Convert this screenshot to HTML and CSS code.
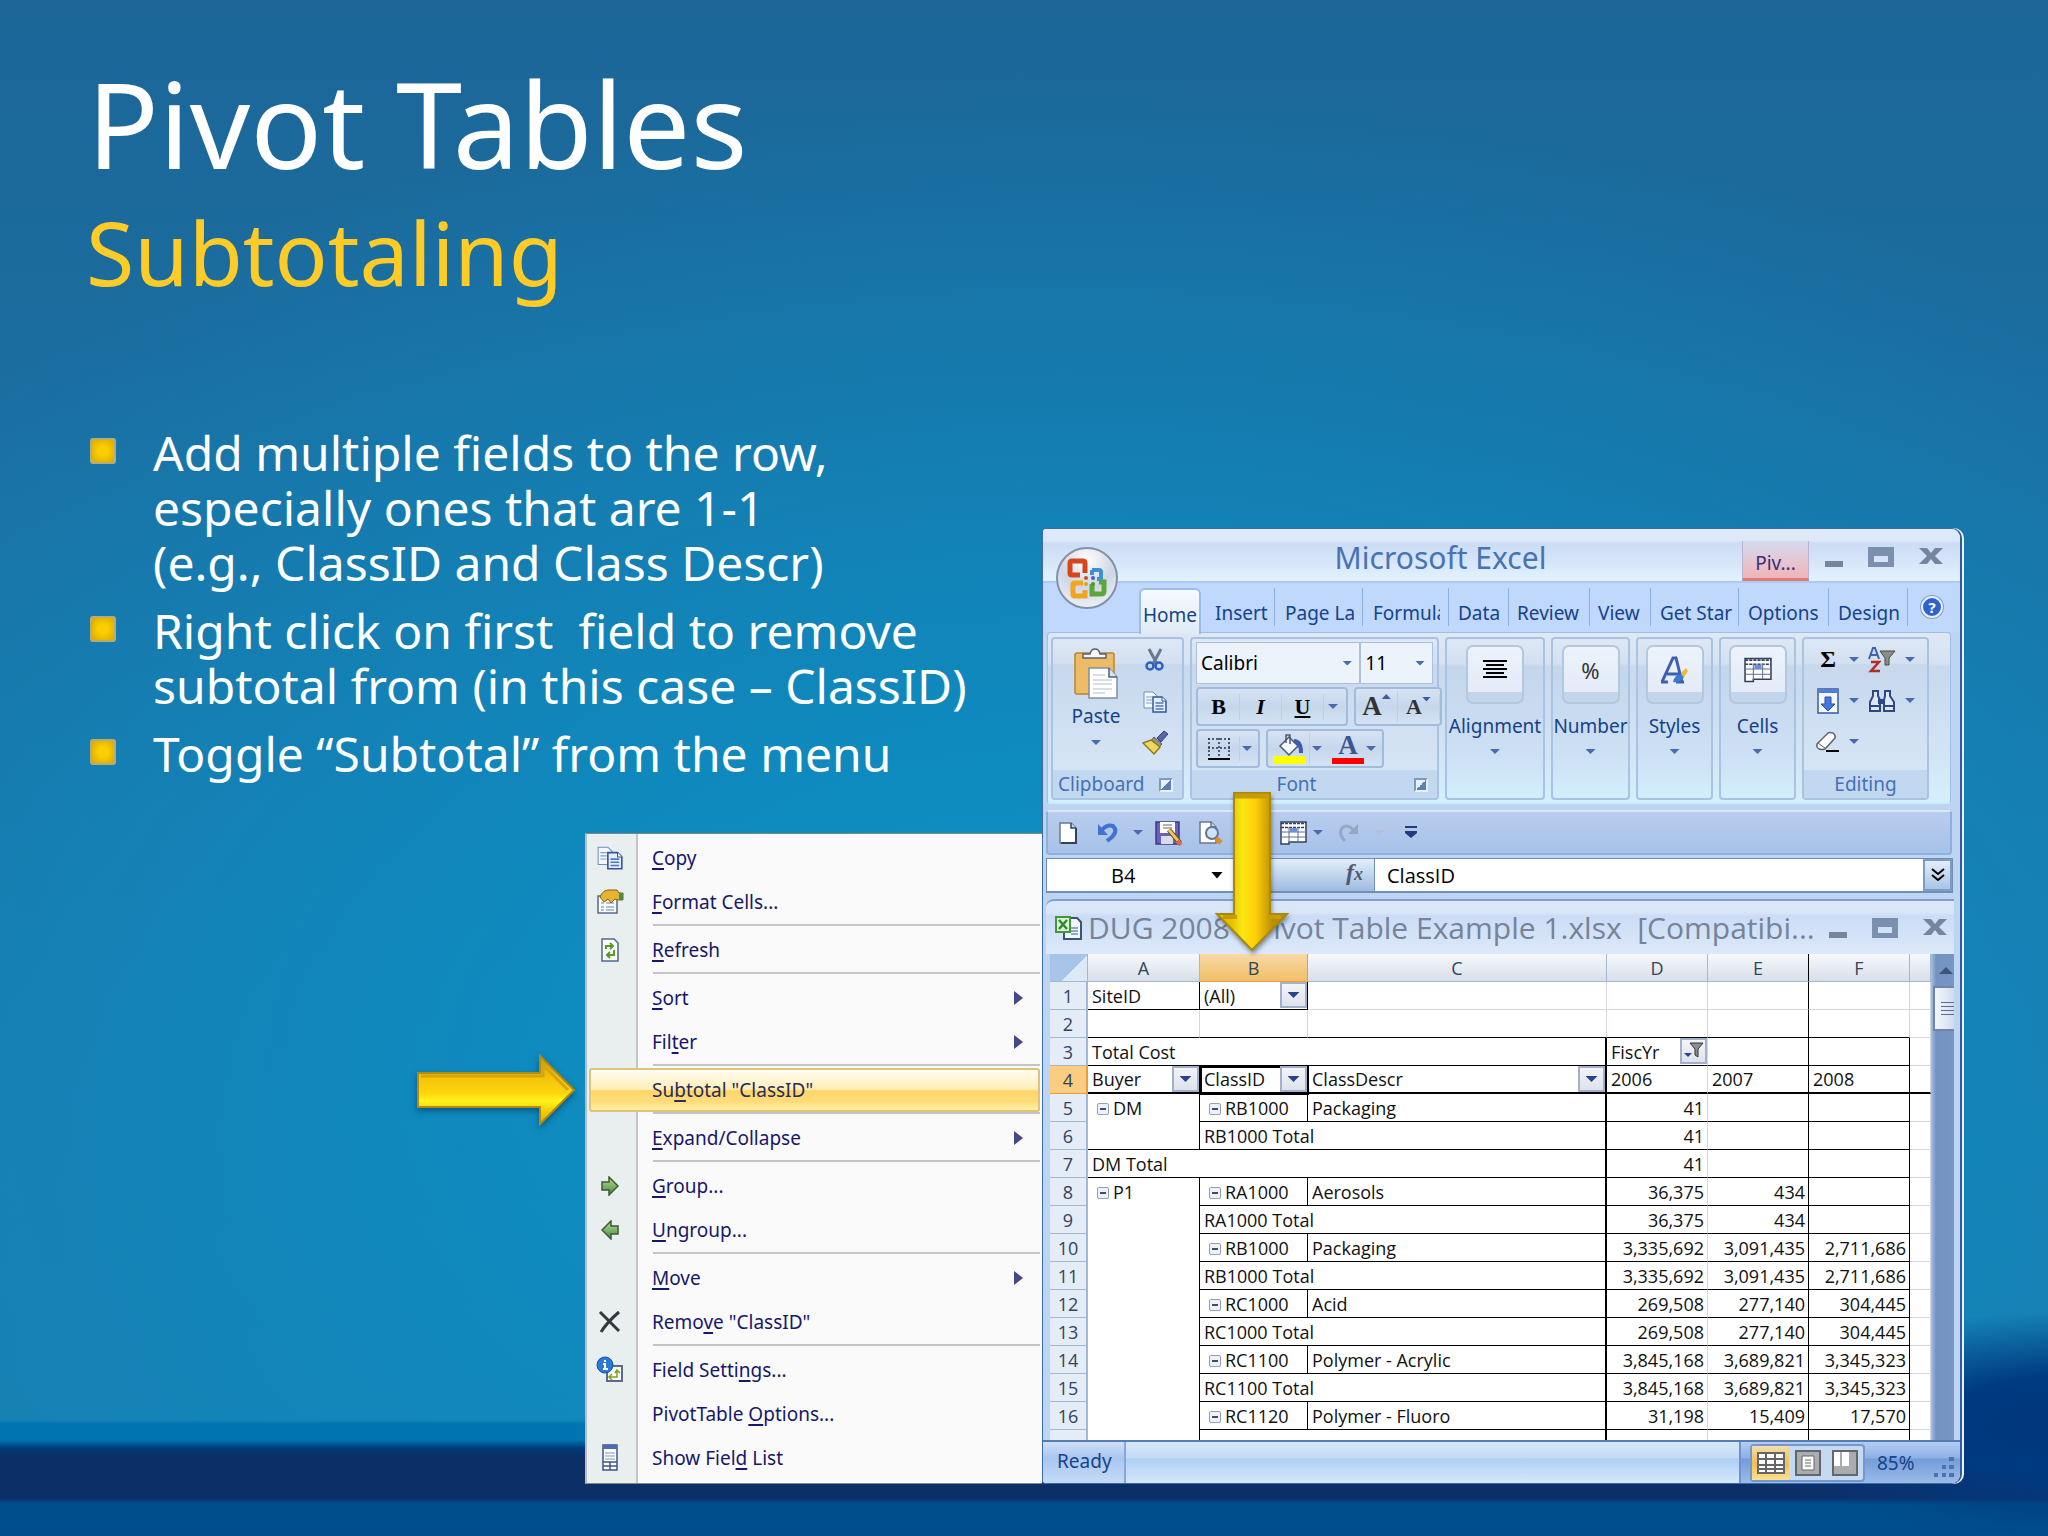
FILE: index.html
```html
<!DOCTYPE html>
<html lang="en">
<head>
    <meta charset="UTF-8">
    <meta name="viewport" content="width=device-width, initial-scale=1.0">
    <title>Pivot Tables - Subtotaling</title>
    <link rel="stylesheet" href="styles.css">
</head>
<body>
    <!-- shared icon shapes -->
    <svg class="defs" aria-hidden="true">
        <defs>
            <linearGradient id="goldH" x1="0" y1="0" x2="0" y2="1">
                <stop offset="0" stop-color="#c99a08"/>
                <stop offset="0.3" stop-color="#f2c10c"/>
                <stop offset="0.55" stop-color="#ffd60c"/>
                <stop offset="0.66" stop-color="#fff51c"/>
                <stop offset="0.8" stop-color="#f0d008"/>
                <stop offset="1" stop-color="#d9b000"/>
            </linearGradient>
            <linearGradient id="goldV" x1="0" y1="0" x2="1" y2="0">
                <stop offset="0.2" stop-color="#e0c000"/>
                <stop offset="0.36" stop-color="#fbe712"/>
                <stop offset="0.55" stop-color="#ffcf08"/>
                <stop offset="0.8" stop-color="#b98d04"/>
            </linearGradient>
            <radialGradient id="orb" cx="0.5" cy="0.2" r="0.9">
                <stop offset="0" stop-color="#ffffff"/>
                <stop offset="0.5" stop-color="#cfd6e4"/>
                <stop offset="1" stop-color="#f4f7fc"/>
            </radialGradient>
            <linearGradient id="green" x1="0" y1="0" x2="0" y2="1">
                <stop offset="0" stop-color="#b5dd98"/>
                <stop offset="1" stop-color="#4c8a3c"/>
            </linearGradient>
        </defs>
        <symbol id="copy" viewBox="0 0 26 24">
            <path d="M2 2h9l4 4v12H2z" fill="#f4f8ff" stroke="#6f8fc4"/>
            <path d="M4 7h6M4 10h6M4 13h6" stroke="#7fa0d8"/>
            <path d="M11 7h9l4 4v11H11z" fill="#e4eefc" stroke="#34559c" stroke-width="1.5"/>
            <path d="M20 7v4h4" fill="#fff" stroke="#34559c"/>
            <path d="M13.500 13h8M13.500 16h8M13.500 19h8" stroke="#4b78cc" stroke-width="1.500"/>
        </symbol>
        <symbol id="grid" viewBox="0 0 27 24">
            <path d="M1 1h25v20H9v2H1z" fill="#fff" stroke="#33415e" stroke-width="1.500"/>
            <path d="M1 2.500h25M1 6.500h25" stroke="#33415e" stroke-width="1.500" stroke-dasharray="3 1"/>
            <path d="M1 11h25M1 16h25M9 6v16M18 6v15" stroke="#5b6f96"/>
            <path d="M10 7h7v4h-7z" fill="#6f8fdc"/>
        </symbol>
    </svg>

    <main class="slide">
        <div class="left">
            <h1>Pivot Tables</h1>
            <h2>Subtotaling</h2>

            <ul class="bullets">
                <li>Add multiple fields to the row,<br>especially ones that are 1-1<br>(e.g., ClassID and Class Descr)</li>
                <li>Right click on first&nbsp; field to remove<br>subtotal from (in this case – ClassID)</li>
                <li>Toggle “Subtotal” from the menu</li>
            </ul>

            <div class="menu-row">
                <svg class="arrow-right" viewBox="0 0 160 76" aria-hidden="true">
                    <path d="M2 20H124V3L158 37L124 71V54H2z" fill="url(#goldH)" stroke="#b48a06" stroke-width="2"/>
                    <path d="M5 23H127V12L152 37" fill="none" stroke="#d8a50a" stroke-width="3"/>
                </svg>

                <nav class="menu">
                    <button class="item"><span class="ico"><svg width="28" height="26"><use href="#copy"/></svg></span><span><u>C</u>opy</span></button>
                    <button class="item"><span class="ico">
                        <svg width="28" height="26" viewBox="0 0 28 26"><path d="M2 7h19v17H2z" fill="#fafcff" stroke="#566a8c" stroke-width="1.500"/><path d="M5 14h3M10 14h8M5 18h3M10 18h8M5 21h3M10 21h8" stroke="#6a83b0"/><path d="M4 8c2-5 5-7 9-7h8l2 3h4v7h-5l-3-1-4 4-3-4-4 3z" fill="#e8b32e" stroke="#7e6318"/><path d="M23 4h4v7h-4z" fill="#4c8a4a"/></svg>
                    </span><span><u>F</u>ormat Cells...</span></button>
                    <hr>
                    <button class="item"><span class="ico">
                        <svg width="20" height="26" viewBox="0 0 20 26"><path d="M2 2h12l4 4v18H2z" fill="#fbfdff" stroke="#4f6a90" stroke-width="1.500"/><path d="M6 12V9h6M10 6l3 3-3 3M14 13v5H8M10 15l-3 3 3 3" fill="none" stroke="#5a9a1c" stroke-width="2"/></svg>
                    </span><span><u>R</u>efresh</span></button>
                    <hr>
                    <button class="item sub"><span class="ico"></span><span><u>S</u>ort</span></button>
                    <button class="item sub"><span class="ico"></span><span>Fil<u>t</u>er</span></button>
                    <hr>
                    <button class="item active"><span class="ico"></span><span>Su<u>b</u>total "ClassID"</span></button>
                    <hr>
                    <button class="item sub"><span class="ico"></span><span><u>E</u>xpand/Collapse</span></button>
                    <hr>
                    <button class="item"><span class="ico">
                        <svg width="18" height="20" viewBox="0 0 18 20"><path d="M1 6h7V1l9 9-9 9v-5H1z" fill="url(#green)" stroke="#3c5a38" stroke-width="1.500"/></svg>
                    </span><span><u>G</u>roup...</span></button>
                    <button class="item"><span class="ico">
                        <svg width="18" height="20" viewBox="0 0 18 20"><path d="M17 6h-7V1l-9 9 9 9v-5h7z" fill="url(#green)" stroke="#3c5a38" stroke-width="1.500"/></svg>
                    </span><span><u>U</u>ngroup...</span></button>
                    <hr>
                    <button class="item sub"><span class="ico"></span><span><u>M</u>ove</span></button>
                    <button class="item"><span class="ico">
                        <svg width="24" height="24" viewBox="0 0 24 24"><path d="M2 2l19 19M21 2C14 8 8 14 3 22" fill="none" stroke="#33383c" stroke-width="3"/></svg>
                    </span><span>Remo<u>v</u>e "ClassID"</span></button>
                    <hr>
                    <button class="item"><span class="ico">
                        <svg width="28" height="28" viewBox="0 0 28 28"><path d="M11 10h15v15H11z" fill="#f6f8fc" stroke="#5a6c90" stroke-width="2"/><path d="M14 21h7v-6M16 18l-3 3 3 3M19 17l2-3 3 3" fill="none" stroke="#86a01c" stroke-width="1.500"/><circle cx="9" cy="9" r="8" fill="#2a78d8" stroke="#1a4fa4"/><path d="M9 4v2M7 8h2v5M7 13h5" stroke="#fff" stroke-width="2" fill="none"/></svg>
                    </span><span>Field Setti<u>n</u>gs...</span></button>
                    <button class="item"><span class="ico"></span><span>PivotTable <u>O</u>ptions...</span></button>
                    <button class="item"><span class="ico">
                        <svg width="16" height="28" viewBox="0 0 16 28"><path d="M1 1h14v25H1z" fill="#fff" stroke="#3f5684" stroke-width="1.500"/><path d="M1 1h14v4H1z" fill="#4a6cb0"/><path d="M3 9h10M3 12h10M3 15h10" stroke="#7d93bd"/><path d="M1 18h14M1 22h14M8 18v8" stroke="#3f5684" stroke-width="1.500"/></svg>
                    </span><span>Show Fiel<u>d</u> List</span></button>
                </nav>
            </div>
        </div>

        <section class="excel">
            <header class="titlebar">
                <div class="app-title">Microsoft Excel</div>
                <div class="context-tab">Piv...</div>
                <div class="win-buttons">
                    <button aria-label="Minimize"><svg width="20" height="24" viewBox="0 0 20 24"><path d="M1 16h18v6H1z" fill="#74859f"/></svg></button>
                    <button aria-label="Maximize"><svg width="26" height="24" viewBox="0 0 26 24"><path d="M0 2h26v20H0zM6 11v6h14v-6z" fill="#7b8fae" fill-rule="evenodd"/></svg></button>
                    <button aria-label="Close"><svg width="26" height="24" viewBox="0 0 26 24"><path d="M1 3h8l4 5 4-5h8l-8 8 8 8h-8l-4-5-4 5H1l8-8z" fill="#74859f"/></svg></button>
                </div>
            </header>
            <button class="office" aria-label="Office Button">
                <svg viewBox="0 0 62 62">
                    <circle cx="31" cy="31" r="30" fill="url(#orb)" stroke="#8391a8" stroke-width="2"/>
                    <g fill="none">
                        <path d="M29 26V16q0-2-2-2H16q-2 0-2 2v10q0 2 2 2h8" stroke="#d8451a" stroke-width="5"/>
                        <path d="M36 23h7q2 0 2 2v7h-4M36 28v-5" stroke="#3c8fd8" stroke-width="4"/>
                        <path d="M27 36h-8q-2 0-2 2v9q0 2 2 2h10v-6" stroke="#f2a51e" stroke-width="5"/>
                        <path d="M36 37v10h9q3 0 3-3v-9h-5" stroke="#5aa83c" stroke-width="5"/>
                    </g>
                    <circle cx="30" cy="31" r="2" fill="#c8501e"/>
                    <circle cx="37" cy="31" r="2" fill="#3468b8"/>
                    <circle cx="30" cy="37" r="2" fill="#e89a1e"/>
                    <circle cx="37" cy="37" r="2" fill="#4a9a34"/>
                </svg>
            </button>

            <div class="tabs">
                <button class="tab home">Home</button>
                <button class="tab t-insert"><span>Insert</span></button>
                <button class="tab t-page"><span>Page Layout</span></button>
                <button class="tab t-formula"><span>Formulas</span></button>
                <button class="tab t-data"><span>Data</span></button>
                <button class="tab t-review"><span>Review</span></button>
                <button class="tab t-view"><span>View</span></button>
                <button class="tab t-start"><span>Get Star</span></button>
                <button class="tab t-options"><span>Options</span></button>
                <button class="tab t-design"><span>Design</span></button>
                <button class="help" aria-label="Help">?</button>
            </div>

            <div class="ribbon">
                <div class="group clipboard">
                    <div class="group-body">
                        <button class="paste">
                            <svg width="46" height="52" viewBox="0 0 46 52"><rect x="2" y="5" width="39" height="41" rx="2" fill="#eebc66" stroke="#b98432" stroke-width="1.500"/><path d="M10 10V6h7q1-5 5-5t5 5h6v4z" fill="#f4f6f8" stroke="#596270" stroke-width="1.500"/><path d="M16 20h20l8 9v21H16z" fill="#fff" stroke="#7f8ea8" stroke-width="1.500"/><path d="M36 20v9h8" fill="#d8e2f0" stroke="#4f5d78" stroke-width="1.500"/><path d="M20 27h12M20 32h19M20 36h19M20 41h19M20 45h12" stroke="#b4bccb"/></svg>
                            Paste
                            <i class="caret"></i>
                        </button>
                        <div class="clip-tools">
                            <button aria-label="Cut"><svg width="20" height="26" viewBox="0 0 20 26"><path d="M4 2l8 15M16 2L8 17" stroke="#68798f" stroke-width="3"/><circle cx="5" cy="19" r="3.500" fill="none" stroke="#2e5fc4" stroke-width="2.500"/><circle cx="14" cy="19" r="3.500" fill="none" stroke="#2e5fc4" stroke-width="2.500"/></svg></button>
                            <button aria-label="Copy"><svg width="26" height="24"><use href="#copy"/></svg></button>
                            <button aria-label="Format Painter"><svg width="26" height="26" viewBox="0 0 26 26"><path d="M22 1l4 3-7 8-4-4z" fill="#5a62b0" stroke="#3c4078"/><path d="M12 7l8 7-3 3-8-6z" fill="#9a9488" stroke="#555"/><path d="M9 10l9 7-6 7L1 13z" fill="#f0d860" stroke="#8f7720" stroke-width="1.500"/></svg></button>
                        </div>
                    </div>
                    <div class="group-name">Clipboard<i class="launcher"></i></div>
                </div>

                <div class="group font">
                    <div class="group-body">
                        <div class="row">
                            <div class="combo"><input type="text" value="Calibri" aria-label="Font name"><i class="caret"></i></div>
                            <div class="combo size"><input type="text" value="11" aria-label="Font size"><i class="caret"></i></div>
                        </div>
                        <div class="row tools">
                            <div class="set wide">
                                <button class="serif"><b>B</b></button>
                                <button class="serif"><b><em>I</em></b></button>
                                <button class="serif"><b><u>U</u></b></button>
                                <i class="caret"></i>
                            </div>
                            <div class="set grow">
                                <button class="serif big">A<i class="tri up"></i></button>
                                <button class="serif">A<i class="tri"></i></button>
                            </div>
                        </div>
                        <div class="row tools">
                            <div class="set">
                                <button aria-label="Borders"><svg width="24" height="24" viewBox="0 0 24 24"><path d="M2 1v19M12 1v19M22 1v19M1 2h22M1 11h22" stroke="#2a3350" stroke-width="1.500" stroke-dasharray="2 2"/><path d="M1 22h22" stroke="#000" stroke-width="2"/></svg></button>
                                <i class="caret"></i>
                            </div>
                            <div class="set">
                                <button aria-label="Fill Color"><svg width="34" height="32" viewBox="0 0 34 32"><path d="M8 13l9-9 9 9-9 9z" fill="#f4f7fb" stroke="#4c5a74" stroke-width="1.500"/><path d="M14 10V2h4v9" fill="none" stroke="#4c5a74" stroke-width="1.500"/><path d="M22 8q7 0 7 12" fill="none" stroke="#3c5cb0" stroke-width="4"/><path d="M1 23h32v8H1z" fill="#ffff00"/></svg></button>
                                <i class="caret"></i>
                                <button class="serif fontcolor">A</button>
                                <i class="caret"></i>
                            </div>
                        </div>
                    </div>
                    <div class="group-name">Font<i class="launcher"></i></div>
                </div>

                <button class="group small alignment">
                    <span class="tile"><svg width="24" height="20" viewBox="0 0 24 20"><path d="M0 1h24M3 5h18M0 9h24M3 13h18M0 17h24" stroke="#000" stroke-width="2"/></svg></span>
                    Alignment<i class="caret"></i>
                </button>
                <button class="group small number">
                    <span class="tile">%</span>
                    Number<i class="caret"></i>
                </button>
                <button class="group small styles">
                    <span class="tile"><svg width="28" height="28" viewBox="0 0 28 28"><path d="M1 26L12 2h3l6 24M6 18h12M0 26h7M15 26h8" fill="none" stroke="#3f5fae" stroke-width="3"/><path d="M12 26q2-8 8-8l3 3q-3 6-11 5z" fill="#3a7ad0"/><path d="M20 17l5-5 2 3-4 6z" fill="#f0b92c"/></svg></span>
                    Styles<i class="caret"></i>
                </button>
                <button class="group small cells">
                    <span class="tile"><svg width="28" height="28"><use href="#grid"/></svg></span>
                    Cells<i class="caret"></i>
                </button>

                <div class="group editing">
                    <div class="group-body edit-grid">
                        <button class="serif sigma"><b>Σ</b></button><i class="caret"></i>
                        <button aria-label="Sort and Filter"><svg width="28" height="26" viewBox="0 0 28 26"><path d="M1 12L5 1h2l4 11M3 8h6" fill="none" stroke="#3c62b4" stroke-width="2"/><path d="M3 15h8L3 24h9" fill="none" stroke="#b42c28" stroke-width="2.500"/><path d="M12 4h15l-6 7v7h-4v-7z" fill="#8a8e86" stroke="#44483e"/></svg></button><i class="caret"></i>
                        <button aria-label="Fill"><svg width="22" height="26" viewBox="0 0 22 26"><path d="M1 1h20v24H1z" fill="#f2f6fd" stroke="#3c5a9c" stroke-width="1.500"/><path d="M1 1h20v4H1z" fill="#4f80d8"/><path d="M8 9h6v7h4l-7 7-7-7h4z" fill="#3f78e0" stroke="#2a50a0"/></svg></button><i class="caret"></i>
                        <button aria-label="Find"><svg width="28" height="24" viewBox="0 0 28 24"><path d="M5 2h5v5l2 4v11H2V13l3-6zM17 2h5v5l4 6v9H16V11l1-4z" fill="#dfe8f8" stroke="#2f4784" stroke-width="2"/><path d="M10 10h6v5h-6z" fill="#2f4784"/><path d="M2 17h10M16 17h10" stroke="#2f4784" stroke-width="2"/></svg></button><i class="caret"></i>
                        <button aria-label="Clear"><svg width="26" height="22" viewBox="0 0 26 22"><path d="M2 13L13 2q2-1 5 0 3 2 2 5L10 18q-3 1-6 0-3-2-2-5z" fill="#fff" stroke="#5d6675" stroke-width="1.500"/><path d="M3 12l7 5" stroke="#5d6675"/><path d="M11 20h13" stroke="#000" stroke-width="2"/></svg></button><i class="caret"></i>
                    </div>
                    <div class="group-name">Editing</div>
                </div>
            </div>

            <div class="qat">
                <button aria-label="New"><svg width="20" height="24" viewBox="0 0 20 24"><path d="M2 2h11l5 5v15H2z" fill="#fff" stroke="#6a7890" stroke-width="1.500"/><path d="M13 2v5h5" fill="#c8d4e8" stroke="#33415e" stroke-width="1.500"/><path d="M18 7v15H3" fill="none" stroke="#33415e" stroke-width="2"/></svg></button>
                <button class="undo" aria-label="Undo"><svg width="22" height="22" viewBox="0 0 22 22"><path d="M5 8q5-6 11-4 5 5-1 11l-5 4" fill="none" stroke="#4272d0" stroke-width="4"/><path d="M1 2v11h10z" fill="#4272d0"/></svg></button>
                <i class="caret"></i>
                <button class="save" aria-label="Save As"><svg width="28" height="26" viewBox="0 0 28 26"><path d="M1 2h23v22H1z" fill="#6a5fc0" stroke="#3d3a80" stroke-width="1.500"/><path d="M5 2h15v11H5z" fill="#fff"/><path d="M8 5h9M8 8h9" stroke="#667"/><path d="M6 16h12v8H6z" fill="#d6dcec"/><path d="M14 10l11 13" stroke="#5b4a1c" stroke-width="5"/><path d="M14 10l11 13" stroke="#f0c84c" stroke-width="3"/><path d="M22 21l4 4" stroke="#d86848" stroke-width="4"/></svg></button>
                <button class="preview" aria-label="Print Preview"><svg width="26" height="26" viewBox="0 0 26 26"><path d="M2 2h11l5 5v16H2z" fill="#fff" stroke="#6a7890" stroke-width="1.500"/><path d="M13 2v5h5" fill="#c8d4e8" stroke="#33415e"/><circle cx="14" cy="13" r="6" fill="#cfe2fa" stroke="#66758f" stroke-width="2"/><path d="M18 18l5 5" stroke="#d8902c" stroke-width="5"/></svg></button>
                <button class="table" aria-label="Pivot Table"><svg width="27" height="24"><use href="#grid"/></svg></button>
                <i class="caret"></i>
                <button class="redo" aria-label="Redo"><svg width="22" height="22" viewBox="0 0 22 22"><path d="M7 19q-7-7-3-13 6-5 12 3" fill="none" stroke="#96a7c4" stroke-width="3"/><path d="M20 2v10H10z" fill="#96a7c4"/></svg></button>
                <i class="caret dim"></i>
                <button class="more" aria-label="Customize"><svg width="12" height="14" viewBox="0 0 12 14"><path d="M0 1h12" stroke="#1f3c7c" stroke-width="2"/><path d="M0 5h12v2l-6 5-6-5z" fill="#1f3c7c"/></svg></button>
            </div>

            <div class="formula">
                <input class="name-box" type="text" value="B4" aria-label="Name box">
                <i class="caret black"></i>
                <span class="fx">f<small>x</small></span>
                <input class="formula-box" type="text" value="ClassID" aria-label="Formula">
                <button class="expand" aria-label="Expand formula bar"><svg width="14" height="14" viewBox="0 0 14 14"><path d="M1 1l6 5 6-5M1 7l6 5 6-5" fill="none" stroke="#000" stroke-width="2"/></svg></button>
            </div>

            <div class="book-title">
                <svg width="28" height="26" viewBox="0 0 28 26"><path d="M9 3h13l4 4v17H9z" fill="#f4f8fd" stroke="#3a5578" stroke-width="2"/><path d="M16 13h7M16 16h7M16 19h7" stroke="#6f8fb4" stroke-width="1.500"/><path d="M1 2h14v15H1z" fill="#dff2d8" stroke="#3f9a3c" stroke-width="2"/><path d="M4 5l8 9M12 5l-8 9" stroke="#2c8a30" stroke-width="2.500"/></svg>
                <div class="book-name">DUG 2008 - Pivot Table Example 1.xlsx&nbsp; [Compatibi...</div>
                <div class="win-buttons">
                    <button aria-label="Minimize"><svg width="20" height="24" viewBox="0 0 20 24"><path d="M1 16h18v6H1z" fill="#74859f"/></svg></button>
                    <button aria-label="Maximize"><svg width="26" height="24" viewBox="0 0 26 24"><path d="M0 2h26v20H0zM6 11v6h14v-6z" fill="#7b8fae" fill-rule="evenodd"/></svg></button>
                    <button aria-label="Close"><svg width="26" height="24" viewBox="0 0 26 24"><path d="M1 3h8l4 5 4-5h8l-8 8 8 8h-8l-4-5-4 5H1l8-8z" fill="#74859f"/></svg></button>
                </div>
            </div>

            <div class="sheet">
                <table>
                    <colgroup>
                        <col class="c-head"><col class="c-a"><col class="c-b"><col>
                        <col class="c-num"><col class="c-num"><col class="c-num"><col class="c-rest">
                    </colgroup>
                    <thead>
                        <tr><th class="corner"></th><th>A</th><th class="sel">B</th><th>C</th><th>D</th><th class="kr">E</th><th>F</th><th></th></tr>
                    </thead>
                    <tbody>
                        <tr><th>1</th><td class="kr kb">SiteID</td><td class="kr kb">(All)<button class="dd" aria-label="Filter"></button></td><td></td><td></td><td class="kr"></td><td></td><td></td></tr>
                        <tr><th>2</th><td class="kb"></td><td class="kb"></td><td class="kb"></td><td class="kb"></td><td class="kr kb"></td><td class="kb"></td><td></td></tr>
                        <tr><th>3</th><td class="hr kb" colspan="3">Total Cost</td><td class="kb">FiscYr<button class="dd filter" aria-label="Filter"><svg width="20" height="18" viewBox="0 0 20 18"><path d="M6 1h13l-5 6v8l-3-2V7z" fill="#8a8e96" stroke="#333"/><path d="M0 11h8l-4 4z" fill="#2c418c"/></svg></button></td><td class="kr kb"></td><td class="kr kb"></td><td></td></tr>
                        <tr class="heavy"><th class="sel">4</th><td>Buyer<button class="dd" aria-label="Filter"></button></td><td class="kr cursor">ClassID<button class="dd" aria-label="Filter"></button></td><td class="hr">ClassDescr<button class="dd" aria-label="Filter"></button></td><td>2006</td><td class="kr">2007</td><td class="kr">2008</td><td></td></tr>
                        <tr class="n"><th>5</th><td class="kr nb in"><i class="minus"></i>DM</td><td class="kr kb in"><i class="minus"></i>RB1000</td><td class="hr kb">Packaging</td><td class="kb">41</td><td class="kr kb"></td><td class="kr kb"></td><td></td></tr>
                        <tr class="n"><th>6</th><td class="kr kb"></td><td class="hr kb" colspan="2">RB1000 Total</td><td class="kb">41</td><td class="kr kb"></td><td class="kr kb"></td><td></td></tr>
                        <tr class="n"><th>7</th><td class="hr kb" colspan="3">DM Total</td><td class="kb">41</td><td class="kr kb"></td><td class="kr kb"></td><td></td></tr>
                        <tr class="n"><th>8</th><td class="kr nb in"><i class="minus"></i>P1</td><td class="kr kb in"><i class="minus"></i>RA1000</td><td class="hr kb">Aerosols</td><td class="kb">36,375</td><td class="kr kb">434</td><td class="kr kb"></td><td></td></tr>
                        <tr class="n"><th>9</th><td class="kr nb"></td><td class="hr kb" colspan="2">RA1000 Total</td><td class="kb">36,375</td><td class="kr kb">434</td><td class="kr kb"></td><td></td></tr>
                        <tr class="n"><th>10</th><td class="kr nb"></td><td class="kr kb in"><i class="minus"></i>RB1000</td><td class="hr kb">Packaging</td><td class="kb">3,335,692</td><td class="kr kb">3,091,435</td><td class="kr kb">2,711,686</td><td></td></tr>
                        <tr class="n"><th>11</th><td class="kr nb"></td><td class="hr kb" colspan="2">RB1000 Total</td><td class="kb">3,335,692</td><td class="kr kb">3,091,435</td><td class="kr kb">2,711,686</td><td></td></tr>
                        <tr class="n"><th>12</th><td class="kr nb"></td><td class="kr kb in"><i class="minus"></i>RC1000</td><td class="hr kb">Acid</td><td class="kb">269,508</td><td class="kr kb">277,140</td><td class="kr kb">304,445</td><td></td></tr>
                        <tr class="n"><th>13</th><td class="kr nb"></td><td class="hr kb" colspan="2">RC1000 Total</td><td class="kb">269,508</td><td class="kr kb">277,140</td><td class="kr kb">304,445</td><td></td></tr>
                        <tr class="n"><th>14</th><td class="kr nb"></td><td class="kr kb in"><i class="minus"></i>RC1100</td><td class="hr kb">Polymer - Acrylic</td><td class="kb">3,845,168</td><td class="kr kb">3,689,821</td><td class="kr kb">3,345,323</td><td></td></tr>
                        <tr class="n"><th>15</th><td class="kr nb"></td><td class="hr kb" colspan="2">RC1100 Total</td><td class="kb">3,845,168</td><td class="kr kb">3,689,821</td><td class="kr kb">3,345,323</td><td></td></tr>
                        <tr class="n"><th>16</th><td class="kr nb"></td><td class="kr kb in"><i class="minus"></i>RC1120</td><td class="hr kb">Polymer - Fluoro</td><td class="kb">31,198</td><td class="kr kb">15,409</td><td class="kr kb">17,570</td><td></td></tr>
                        <tr class="cut"><th></th><td class="kr nb"></td><td class="hr nb" colspan="2"></td><td class="nb"></td><td class="kr nb"></td><td class="kr nb"></td><td class="nb"></td></tr>
                    </tbody>
                </table>
                <div class="scroll">
                    <i class="scroll-up"></i>
                    <i class="thumb"></i>
                </div>
            </div>

            <footer class="status">
                <div class="ready">Ready</div>
                <div class="status-right">
                    <div class="views">
                        <button class="on" aria-label="Normal"><svg width="28" height="24" viewBox="0 0 28 24"><path d="M1 2h26v20H1z" fill="#fff" stroke="#666" stroke-width="2"/><path d="M1 8h26M1 14h26M1 18h26M9 2v20M18 2v20" stroke="#666" stroke-width="2"/></svg></button>
                        <button aria-label="Page Layout"><svg width="26" height="26" viewBox="0 0 26 26"><path d="M1 1h24v24H1z" fill="#a9acb0" stroke="#666" stroke-width="2"/><path d="M7 6h12v14H7z" fill="#fff" stroke="#666"/><path d="M10 10h6M10 13h6M10 16h6" stroke="#666"/></svg></button>
                        <button aria-label="Page Break Preview"><svg width="26" height="26" viewBox="0 0 26 26"><path d="M1 1h24v24H1z" fill="#a9acb0" stroke="#666" stroke-width="2"/><path d="M2 2h6v14H2zM10 2h7v14h-7z" fill="#fff"/></svg></button>
                    </div>
                    <span>85%</span>
                    <svg class="grip" width="22" height="22" viewBox="0 0 22 22"><path d="M16 1h5v4h-5zM9 9h4v4H9zM16 9h5v4h-5zM1 17h4v4H1zM9 17h4v4H9zM16 17h5v4h-5z" fill="#4f72a8"/></svg>
                </div>
            </footer>

            <svg class="arrow-down" viewBox="0 0 74 162" aria-hidden="true">
                <path d="M19 1H55V122H72L37 158L2 122H19z" fill="url(#goldV)" stroke="#a88a08" stroke-width="2"/>
                <path d="M20 4H54" stroke="#c79c06" stroke-width="5"/>
                <path d="M8 125H22M52 125H66" stroke="#c79c06" stroke-width="4"/>
            </svg>
        </section>
    </main>
</body>
</html>
```
FILE: styles.css
```css
*,
*::before,
*::after {
    margin: 0;
    padding: 0;
    box-sizing: border-box;
}

body {
    font-family: 'Noto Sans', 'Open Sans', sans-serif;
    font-size: 19px;
    color: white;
}

button {
    font: inherit;
    color: inherit;
    background: none;
    border: none;
}

input {
    font: inherit;
    color: black;
    border: none;
    background: none;
    min-width: 0;
}

svg {
    display: block;
    flex-shrink: 0;
}

.defs {
    position: absolute;
    width: 0;
    height: 0;
}

.slide {
    min-height: 100vh;
    display: grid;
    grid-template-columns: minmax(0, 1042fr) minmax(0, 920fr);
    padding: 50px 86px 52px 0;
    background:
        radial-gradient(ellipse 400px 115px at 103% 1425px, #00347a 0%, #003a80 45%, rgba(0, 70, 140, 0) 100%),
        linear-gradient(to top, #004c8c 0, #00508c 32px, #0d2f68 38px, #0d2f68 80px, #003c78 88px, #0074b2 96px, #0074b0 112px, rgba(0, 116, 176, 0) 116px),
        radial-gradient(ellipse 75% 65% at 52% 70%, #0894c8 0%, rgba(12, 143, 196, 0.7) 45%, rgba(24, 120, 172, 0) 100%),
        linear-gradient(to bottom, #1c6698 0%, #1b73a6 45%, #1b7cae 100%);
}

/* ---------- left side ---------- */

.left {
    display: flex;
    flex-direction: column;
}

h1 {
    font-size: 119px;
    line-height: 146px;
    font-weight: normal;
    padding-left: 87px;
}

h2 {
    font-size: 88px;
    line-height: 112px;
    font-weight: normal;
    color: #ffcb27;
    padding-left: 86px;
}

.bullets {
    list-style: none;
    margin-top: 117px;
    padding-left: 90px;
    font-size: 48px;
    line-height: 55px;
    white-space: nowrap;
}

.bullets li {
    display: flex;
    margin-bottom: 13px;
}

.bullets li::before {
    content: '';
    flex-shrink: 0;
    width: 26px;
    height: 26px;
    margin: 13px 37px 0 0;
    background: radial-gradient(#fbce00 30%, #d9a800 100%);
    border: 2px solid #b4ab7c;
    border-radius: 3px;
}

.menu-row {
    display: flex;
    justify-content: flex-end;
    align-items: flex-start;
    margin-top: auto;
}

.arrow-right {
    width: 160px;
    height: 76px;
    margin: 220px 9px 0 0;
    filter: drop-shadow(0 3px 3px rgba(0, 40, 80, 0.5));
}

.menu {
    width: 457px;
    height: 651px;
    padding: 2px;
    border: 1px solid #868686;
    border-left: 2px solid #b8bcc4;
    border-right: none;
    background: linear-gradient(to right, #e9eeee 49px, #c5c5c5 49px, #c5c5c5 51px, #fafafa 51px);
    color: #17176b;
}

.menu hr {
    height: 4px;
    border: none;
    border-top: 2px solid #c5c5c5;
    margin-left: 64px;
}

.item {
    display: flex;
    align-items: center;
    width: 100%;
    height: 44px;
    text-align: left;
    white-space: nowrap;
}

.item u {
    text-underline-offset: 3px;
    text-decoration-thickness: 2px;
}

.ico {
    width: 63px;
    padding-right: 21px;
    display: flex;
    justify-content: center;
}

.sub::after {
    content: '';
    margin-left: auto;
    margin-right: 17px;
    border: 7px solid transparent;
    border-left: 9px solid #434a86;
    border-right: none;
}

.active {
    border: 2px solid #ddc47c;
    border-radius: 3px;
    background: linear-gradient(to bottom, #fffdf0 0%, #ffeeb8 48%, #ffd767 52%, #ffdc7c 80%, #fff0a8 100%);
    color: #2a2a5c;
}

.active .ico {
    width: 61px;
}

/* ---------- excel window ---------- */

.excel {
    position: relative;
    align-self: end;
    border: 1px solid #3b6aa8;
    border-right: 2px solid #33599a;
    border-radius: 4px 10px 10px 4px;
    background: #bdd4f3;
    color: #15428b;
    box-shadow: 2px 0 0 #e8f2fb;
    overflow: hidden;
    min-width: 900px;
}

.titlebar {
    display: flex;
    height: 54px;
    padding-left: 96px;
    border-bottom: 2px solid #a9cdf2;
    background: linear-gradient(to bottom, #dfebfa 0, #dce8f8 12px, #cbdcf4 14px, #d5e4f8 30px, #e2f3ff 100%);
}

.app-title {
    flex: 1;
    text-align: center;
    font-size: 30px;
    line-height: 58px;
    color: #4673b4;
}

.context-tab {
    width: 67px;
    margin-top: 12px;
    text-align: center;
    line-height: 44px;
    color: #3b2f7c;
    border: 1px solid #b9b4cf;
    border-top: none;
    border-bottom: 3px solid #e0787c;
    background: linear-gradient(to bottom, #d4dcf0, #e6c4cf 60%, #f0b4b6);
}

.win-buttons {
    display: flex;
    gap: 24px;
    align-items: center;
    padding: 4px 16px 0 15px;
}

.office {
    position: absolute;
    left: 13px;
    top: 18px;
    width: 62px;
    height: 62px;
    z-index: 2;
}

.tabs {
    display: flex;
    height: 49px;
    padding: 5px 0 0 96px;
    background: #bfd8fb;
}

.tab {
    height: 38px;
    line-height: 50px;
    padding-left: 8px;
    text-align: left;
    border-right: 1px solid #8fb0dc;
    white-space: nowrap;
}

.tab span {
    display: block;
    height: 38px;
    line-height: 50px;
}

.home {
    width: 62px;
    height: 46px;
    padding: 0;
    margin-right: 6px;
    text-align: center;
    border: 2px solid #9cbce8;
    border-bottom: none;
    border-radius: 6px 6px 0 0;
    background: linear-gradient(to bottom, #f6faff, #e0eaf6);
}

.t-insert { width: 68px; }
.t-page { width: 88px; padding-left: 10px; }
.t-formula { width: 86px; padding-left: 10px; }
.t-data { width: 60px; padding-left: 9px; }
.t-review { width: 81px; }
.t-view { width: 61px; }
.t-start { width: 88px; padding-left: 9px; }
.t-options { width: 90px; padding-left: 9px; }
.t-design { width: 79px; padding-left: 9px; }

/* labels that run out of room are clipped before the divider */
.t-page span,
.t-formula span {
    overflow: hidden;
    height: 41px;
    margin-right: 8px;
}

.help {
    width: 22px;
    height: 22px;
    margin: 8px 0 0 13px;
    border: 2px solid #e8f1fd;
    border-radius: 50%;
    background: #2f62d0;
    box-shadow: 0 0 0 1px #7a9bd4;
    color: white;
    font-weight: bold;
    font-size: 15px;
    line-height: 18px;
}

.ribbon {
    display: flex;
    gap: 6px;
    height: 172px;
    margin: 0 9px 0 4px;
    padding: 4px 3px 2px;
    border: 1px solid #9ebfe4;
    border-bottom: 2px solid #c4f0fb;
    border-radius: 4px;
    background: linear-gradient(to bottom, #dfe8f4 0, #d6e3f3 30px, #c8d9ee 34px, #d2e4f5 70%, #d4f0fc 100%);
}

.group {
    display: flex;
    flex-direction: column;
    border: 2px solid #a9c3e0;
    border-radius: 4px;
    background: linear-gradient(to bottom, #dee8f5 0, #d3e0f1 24px, #c7d8ed 26px, #d6e6f6 134px);
}

.clipboard { width: 133px; }
.font { width: 249px; }
.alignment { width: 100px; }
.number { width: 79px; }
.styles { width: 77px; }
.cells { width: 77px; }
.editing { width: 127px; }

.group-body {
    flex: 1;
    display: flex;
}

.group-name {
    position: relative;
    height: 28px;
    line-height: 29px;
    text-align: center;
    color: #4471b5;
    background: #c2d8f0;
}

.clipboard .group-name {
    text-align: left;
    padding-left: 5px;
}

.font .group-name {
    padding-right: 36px;
}

.launcher {
    position: absolute;
    right: 9px;
    top: 8px;
    width: 14px;
    height: 14px;
    border: 2px solid #7f98bd;
    border-right-color: #e8f1fb;
    border-bottom-color: #e8f1fb;
    background: linear-gradient(135deg, #e8f1fb 50%, #5d7fb2 50%);
}

.caret {
    flex-shrink: 0;
    width: 10px;
    height: 5px;
    background: #4a6ab0;
    clip-path: polygon(0 0, 100% 0, 50% 100%);
}

.caret.dim {
    background: #b7c0d0;
}

.caret.black {
    width: 12px;
    height: 7px;
    background: black;
}

.paste {
    width: 86px;
    padding-top: 9px;
    display: flex;
    flex-direction: column;
    align-items: center;
    line-height: 28px;
}

.paste svg {
    margin-bottom: 2px;
}

.paste .caret {
    margin-top: 10px;
}

.clip-tools {
    display: flex;
    flex-direction: column;
    align-items: center;
    justify-content: space-between;
    width: 32px;
    padding: 8px 0 14px;
}

.font .group-body {
    flex-direction: column;
    gap: 3px;
    padding: 3px 4px 0;
}

.row {
    display: flex;
}

.tools {
    gap: 6px;
}

.combo {
    display: flex;
    align-items: center;
    width: 165px;
    height: 42px;
    padding: 0 7px 0 4px;
    border: 1px solid #abc1de;
    background: #edf3fb;
}

.combo input {
    flex: 1;
    width: 40px;
    height: 34px;
}

.size {
    width: 73px;
}

.set {
    display: flex;
    align-items: center;
    height: 39px;
    border: 2px solid #a2bbdc;
    border-radius: 4px;
    background: linear-gradient(to bottom, #d6e3f2, #c6d7ec 50%, #d3e3f4);
    padding-right: 4px;
}

.set button {
    width: 42px;
    display: flex;
    justify-content: center;
    border-right: 1px solid #bdd0e8;
}

.set .caret {
    margin: 0 2px;
}

.set.wide .caret {
    margin: 0 4px;
}

.set.grow {
    flex: 1;
    padding: 0;
}

.set.grow button {
    flex: 1;
    align-items: baseline;
}

.serif {
    font-family: 'Liberation Serif', serif;
    font-size: 22px;
    font-weight: bold;
    color: black;
}

.big {
    font-size: 27px;
}

.grow .serif {
    color: #333;
}

.sigma {
    font-size: 24px;
}

.tri {
    align-self: flex-start;
    width: 9px;
    height: 5px;
    margin-top: 3px;
    background: #3c5ca4;
    clip-path: polygon(0 0, 100% 0, 50% 100%);
}

.tri.up {
    clip-path: polygon(50% 0, 100% 100%, 0 100%);
}

.set .fontcolor {
    width: 32px;
    margin-left: 8px;
    line-height: 25px;
    font-size: 27px;
    color: #3c5590;
    border-right: none;
    border-bottom: 6px solid #ff0000;
}

.small {
    align-items: center;
    justify-content: flex-start;
    line-height: 26px;
    padding-top: 6px;
    background: linear-gradient(to bottom, #dee8f5 0, #d3e0f1 24px, #c4d6ec 28px, #cddff3 70%, #d2effc 100%);
}

.tile {
    display: flex;
    align-items: center;
    justify-content: center;
    width: 58px;
    height: 59px;
    margin-bottom: 9px;
    padding-bottom: 10px;
    border: 2px solid #b4c8dc;
    border-radius: 7px;
    background: linear-gradient(to bottom, #edf3fb 0, #e2ebf8 45px, #c3d5ea 45px);
    font-size: 22px;
    color: #333;
}

.small .caret {
    margin-top: 10px;
}

.edit-grid {
    display: grid;
    grid-template-columns: 38px 14px 42px 14px;
    grid-template-rows: 41px 41px 41px;
    align-items: center;
    justify-items: center;
    padding-left: 5px;
}

.qat {
    display: flex;
    align-items: center;
    height: 45px;
    margin: 6px 8px 3px 3px;
    padding-left: 10px;
    border: 2px solid #8fb0dc;
    border-top-color: #dbe8fa;
    border-radius: 4px;
    background: linear-gradient(to bottom, #b8cdee, #a7c1e8);
}

.undo { margin: 0 14px 0 19px; }
.save { margin: 0 15px 0 12px; }
.table { margin: 0 6px 0 56px; }
.redo { margin: 0 14px 0 15px; }
.more { margin-left: 21px; }

.formula {
    display: flex;
    align-items: center;
    height: 35px;
    margin: 0 7px 0 3px;
    border: 1px solid #6f8fb8;
    border-bottom: 2px solid #6f8fb8;
    background: white;
    font-family: 'Open Sans', sans-serif;
    font-size: 20px;
    color: black;
}

.name-box {
    width: 164px;
    padding-left: 64px;
}

.fx {
    width: 141px;
    height: 32px;
    margin-left: 11px;
    padding-right: 11px;
    text-align: right;
    font: italic bold 24px 'Liberation Serif', serif;
    color: #4e5a70;
    background: linear-gradient(to bottom, #e3eefb, #9fbbdf);
    border-right: 1px solid #6f8fb8;
}

.fx small {
    font-size: 18px;
}

.formula-box {
    flex: 1;
    padding-left: 12px;
}

.expand {
    display: flex;
    align-items: center;
    justify-content: center;
    width: 29px;
    height: 32px;
    border: 2px solid #7c9cc8;
    background: linear-gradient(to bottom, #e3eefb, #a9c4e6);
}

.book-title {
    display: flex;
    align-items: center;
    height: 55px;
    margin: 6px 6px 0 3px;
    padding-left: 9px;
    border-top: 2px solid #7e9fcd;
    border-radius: 8px 0 0 0;
    background: linear-gradient(to bottom, #dce8f8 0, #d8e5f7 12px, #cbdcf5 15px, #dce9fa 100%);
}

.book-name {
    flex: 1;
    padding-left: 5px;
    font-family: 'Open Sans', sans-serif;
    font-size: 30px;
    color: #76839a;
    white-space: nowrap;
}

.book-title .win-buttons {
    padding: 0 6px 0 0;
}

.sheet {
    display: flex;
    margin: 0 6px 0 7px;
}

/* ---------- worksheet grid ---------- */

table {
    flex: 1;
    width: 0;
    table-layout: fixed;
    border-collapse: separate;
    border-spacing: 0;
    background: white;
    color: #111;
    font-family: 'Open Sans', sans-serif;
    font-size: 18px;
    line-height: 24px;
}

.c-head { width: 38px; }
.c-a { width: 112px; }
.c-b { width: 108px; }
.c-num { width: 101px; }
.c-rest { width: 21px; }

td {
    position: relative;
    height: 28px;
    padding: 0 3px 0 4px;
    border-right: 1px solid #d3d7e3;
    border-bottom: 1px solid #d3d7e3;
    white-space: nowrap;
}

th {
    font-weight: normal;
    color: #32435c;
    background: #e4ecf7;
    border-right: 2px solid #a3b6d2;
    border-bottom: 1px solid #a3b6d2;
}

thead th {
    height: 28px;
    border-right: 1px solid #a3b6d2;
    background: linear-gradient(to bottom, #f6f9fc, #d8dfea);
}

th.corner {
    background: linear-gradient(135deg, #a9c4e9 60%, #dce9f8 60%);
}

thead th.sel {
    background: linear-gradient(to bottom, #f8d9a4, #f2bf68);
    border-color: #ee9b3c;
}

tbody th.sel {
    background: #fbcd80;
    border-color: #ee9b3c;
}

.kr { border-right: 1px solid black; }
.hr { border-right: 2px solid black; }
.kb { border-bottom: 1px solid black; }
.nb { border-bottom: none; }
.heavy td { border-bottom: 2px solid black; }

thead th.kr {
    border-right-color: black;
}

.n td:nth-last-child(-n+4) {
    text-align: right;
}

.cut td,
.cut th {
    height: 10px;
    border-bottom: none;
}

.in {
    padding-left: 9px;
}

.minus {
    display: inline-block;
    width: 12px;
    height: 12px;
    margin-right: 4px;
    border: 1px solid #93a0b8;
    border-radius: 2px;
    background: linear-gradient(#3c4c78, #3c4c78) center / 6px 2px no-repeat #eef2f8;
}

.dd {
    position: absolute;
    right: 0;
    top: 0;
    width: 27px;
    height: 26px;
    border: 2px solid #a4afc8;
    background: linear-gradient(to bottom, #f2f4f9, #dde2ec);
}

.dd::after {
    content: '';
    display: block;
    width: 12px;
    height: 6px;
    margin: 0 auto;
    background: #2c418c;
    clip-path: polygon(0 0, 100% 0, 50% 100%);
}

.filter {
    padding-left: 2px;
}

.filter::after {
    display: none;
}

.cursor {
    outline: 3px solid black;
    outline-offset: -2px;
}

.scroll {
    width: 23px;
    background: linear-gradient(to right, #a8c0e4, #7593c0 5px, #7896c4);
}

.scroll-up {
    display: block;
    width: 14px;
    height: 7px;
    margin: 13px 0 12px 8px;
    background: #3f5477;
    clip-path: polygon(50% 0, 100% 100%, 0 100%);
}

.thumb {
    display: block;
    height: 45px;
    margin-left: 2px;
    border: 2px solid #6f86ac;
    border-right: none;
    background:
        repeating-linear-gradient(to bottom, #5c6f92 0, #5c6f92 1px, transparent 1px, transparent 4px) 6px 14px / 14px 13px no-repeat,
        linear-gradient(to right, #f4f8fd, #cfdcee);
}

.status {
    display: flex;
    justify-content: space-between;
    height: 43px;
    border-top: 2px solid #567db1;
    line-height: 38px;
    background: linear-gradient(to bottom, #d8e8fc 0, #c3dbf8 16px, #b0d0f5 17px, #d6e8fc 100%);
}

.ready {
    width: 83px;
    padding-left: 14px;
    border-right: 2px solid #86a8d8;
    background: linear-gradient(to bottom, #cfe0f8 0, #a9c6f0 16px, #c6dbf6 100%);
}

.status-right {
    display: flex;
    align-items: center;
    width: 221px;
    padding-left: 9px;
    border-left: 2px solid #6d93cf;
    background: linear-gradient(to bottom, #b3cdf3 0, #8db0e4 16px, #749cda 17px, #9cbbe8 100%);
}

.views {
    display: flex;
    margin-right: 12px;
    border: 2px solid #7598cc;
    border-radius: 4px;
    background: #c6d9f3;
}

.views button {
    display: flex;
    align-items: center;
    justify-content: center;
    width: 37px;
    height: 34px;
}

.views .on {
    background: linear-gradient(to bottom, #f4dcae, #f0bf58 50%, #fbe08c);
}

.grip {
    margin: 8px 0 0 18px;
}

.arrow-down {
    position: absolute;
    left: 172px;
    top: 263px;
    width: 74px;
    height: 162px;
    filter: drop-shadow(1px 3px 2px rgba(40, 50, 70, 0.5));
}
```
